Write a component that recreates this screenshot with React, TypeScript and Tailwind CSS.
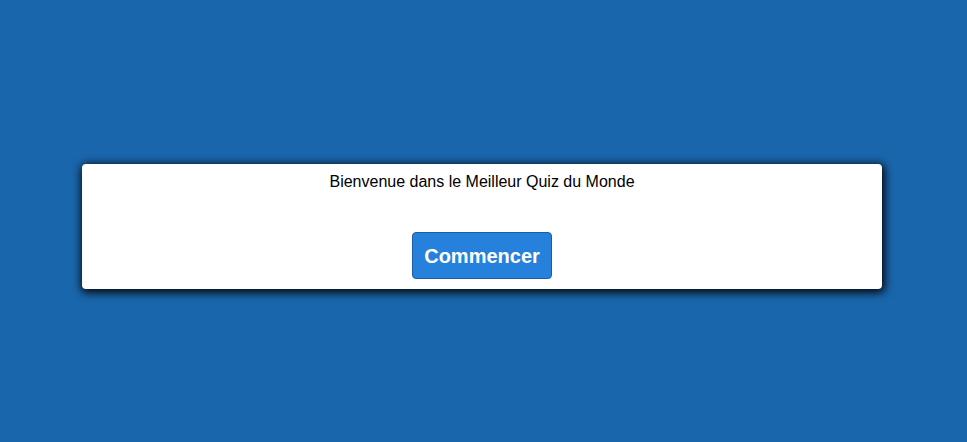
export default function App() {
  return (
    <div className="h-screen w-full bg-[#1a66ac] flex items-start justify-center pt-[164px] font-['Liberation_Sans',Arial,sans-serif]">
      <div className="w-[800px] -ml-[3px] bg-white rounded-[4px] shadow-[1px_2px_9px_2px_rgba(0,0,0,0.9)] flex flex-col items-center pt-[8px] pb-[10px]">
        <p className="text-[16px] leading-[20px] text-black">Bienvenue dans le Meilleur Quiz du Monde</p>
        <button
          type="button"
          className="mt-[40px] h-[47px] px-[11px] rounded-[4px] bg-[#2581dc] border border-[#1b5ea6] text-white text-[20px] font-bold"
        >
          Commencer
        </button>
      </div>
    </div>
  );
}
